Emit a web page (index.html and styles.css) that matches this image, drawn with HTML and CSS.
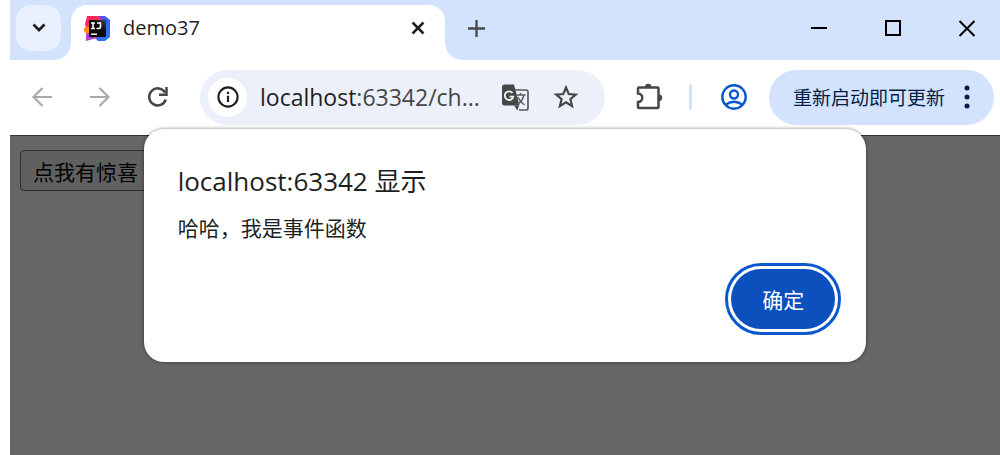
FILE: index.html
```
<!DOCTYPE html>
<html lang="zh-CN">
<head>
    <meta charset="UTF-8">
    <meta name="viewport" content="width=device-width, initial-scale=1.0">
    <title>demo37</title>
    <link rel="stylesheet" href="styles.css">
</head>
<body>
<div class="browser">
    <!-- 标签栏 -->
    <header class="tab-strip">
        <button class="tab-search" aria-label="搜索标签页">
            <svg width="14" height="10" viewBox="0 0 14 10"><path d="M1.500 1.500l5.500 5.500 5.500-5.500" fill="none" stroke="#1f1f1f" stroke-width="2.700"/></svg>
        </button>
        <div class="tab">
            <svg class="favicon" width="27" height="27" viewBox="0 0 27 27">
                <defs>
                    <linearGradient id="ij-blue" x1="0" y1="0" x2="1" y2="1">
                        <stop offset="0" stop-color="#8a45e8"/>
                        <stop offset=".5" stop-color="#2f62f5"/>
                        <stop offset="1" stop-color="#2b7df0"/>
                    </linearGradient>
                    <linearGradient id="ij-dark" x1="0" y1="1" x2="1" y2="0">
                        <stop offset="0" stop-color="#000"/>
                        <stop offset=".6" stop-color="#0b0b0b"/>
                        <stop offset="1" stop-color="#444"/>
                    </linearGradient>
                </defs>
                <path d="M14 1h7l5 4v17l-5 4h-7l-4-4z" fill="url(#ij-blue)"/>
                <path d="M3 1h11l5 5-6 10H3L1 9z" fill="#fb2a5c"/>
                <path d="M0 13l6-2v9H3l-3-4z" fill="#ff8a1c"/>
                <path d="M2 19l6-3 6 7-5 1-7 2z" fill="#b43fd0"/>
                <path d="M5 5h17v17H5z" fill="url(#ij-dark)"/>
                <path d="M7 8h4M9 8v5.500M7 13.500h4M13 8h3.500v4q0 1.500-1.500 1.500h-2.500M7 19.300h6" fill="none" stroke="#fff" stroke-width="1.600"/>
            </svg>
            <span class="tab-title">demo37</span>
            <button class="icon-btn" aria-label="关闭标签页">
                <svg width="14" height="14" viewBox="0 0 14 14"><path d="M1.500 1.500l11 11M12.500 1.500l-11 11" stroke="#1f1f1f" stroke-width="2.500"/></svg>
            </button>
        </div>
        <button class="icon-btn new-tab" aria-label="新标签页">
            <svg width="17" height="17" viewBox="0 0 17 17"><path d="M8.500 0v17M0 8.500h17" stroke="#474747" stroke-width="2.300"/></svg>
        </button>
        <div class="window-controls">
            <button class="icon-btn" aria-label="最小化">
                <svg width="18" height="18" viewBox="0 0 18 18"><path d="M1 9h16" stroke="#000" stroke-width="2"/></svg>
            </button>
            <button class="icon-btn" aria-label="最大化">
                <svg width="18" height="18" viewBox="0 0 18 18"><path d="M2 2h14v14H2z" fill="none" stroke="#000" stroke-width="2"/></svg>
            </button>
            <button class="icon-btn" aria-label="关闭">
                <svg width="18" height="18" viewBox="0 0 18 18"><path d="M1.500 2l15 15M16.500 2l-15 15" stroke="#000" stroke-width="2"/></svg>
            </button>
        </div>
    </header>

    <!-- 工具栏 -->
    <div class="toolbar">
        <nav class="nav-buttons">
            <button class="icon-btn" aria-label="后退">
                <svg width="20" height="20" viewBox="0 0 20 20"><path d="M20 10H2M10.500 1L1.500 10l9 9" fill="none" stroke="#a9a9a9" stroke-width="2.200"/></svg>
            </button>
            <button class="icon-btn" aria-label="前进">
                <svg width="20" height="20" viewBox="0 0 20 20"><path d="M0 10h18M9.500 1l9 9-9 9" fill="none" stroke="#a9a9a9" stroke-width="2.200"/></svg>
            </button>
            <button class="icon-btn" aria-label="重新加载">
                <svg width="20" height="20" viewBox="0 0 20 20"><path d="M17.800 12.500A8.500 8.500 0 1 1 17 5.500" fill="none" stroke="#474747" stroke-width="2.500"/><path d="M18.500 0v7.800H11" fill="none" stroke="#474747" stroke-width="2.500"/></svg>
            </button>
        </nav>

        <div class="omnibox">
            <button class="site-info" aria-label="查看网站信息">
                <svg width="22" height="22" viewBox="0 0 22 22"><circle cx="11" cy="11" r="9.600" fill="none" stroke="#1f1f1f" stroke-width="2.100"/><path d="M11 9.800v6.200M11 5.800v2.200" stroke="#1f1f1f" stroke-width="2.200"/></svg>
            </button>
            <a class="url" href="#">localhost<span>:63342/ch...</span></a>
            <button class="icon-btn" aria-label="翻译此页">
                <svg width="27" height="27" viewBox="0 0 27 27">
                    <path d="M13 6h11q2 0 2 2v16q0 2-2 2h-7" fill="none" stroke="#5c5c5c" stroke-width="1.700"/>
                    <path d="M2.500.500h9.500l5.500 21H2.500q-2.500 0-2.500-2.500V3Q0 .500 2.500.500z" fill="#474747"/>
                    <path d="M12 21.500h5l-1.500 5z" fill="#474747"/>
                    <path d="M10.500 9a4.300 4.300 0 1 0 .8 3.600H7.500" fill="none" stroke="#ecf0fa" stroke-width="1.900"/>
                    <path d="M15 11h8.500M18.500 9v2M22 11q-1.500 6-6 9M15.800 13q2 4.500 6.700 8" fill="none" stroke="#5c5c5c" stroke-width="1.500"/>
                </svg>
            </button>
            <button class="icon-btn" aria-label="加入书签">
                <svg width="26" height="26" viewBox="0 0 26 26"><path d="M13 3.500l2.700 6.500 7.100.600-5.400 4.600 1.700 6.900L13 18.400l-6.100 3.700 1.700-6.900-5.400-4.600 7.100-.600z" fill="none" stroke="#474747" stroke-width="2.200"/></svg>
            </button>
        </div>

        <button class="icon-btn" aria-label="扩展程序">
            <svg width="28" height="28" viewBox="0 0 28 28"><path d="M4 4.500h18.500q1 0 1 1v18.500q0 1-1 1H4q-1 0-1-1v-5a4.200 4.200 0 0 0 0-8.500V5.500q0-1 1-1z" fill="none" stroke="#474747" stroke-width="2.500"/><path d="M10 4a3.200 3.200 0 0 1 6.400 0zM24 11.500a3.200 3.200 0 0 1 0 6.400z" fill="#474747"/></svg>
        </button>
        <span class="divider"></span>
        <button class="icon-btn" aria-label="个人资料">
            <svg width="26" height="26" viewBox="0 0 26 26" fill="none" stroke="#0b57d0" stroke-width="2.400"><circle cx="13" cy="13" r="11.700"/><circle cx="13" cy="10.500" r="4"/><path d="M4.500 20.800q8.500-6 17 0"/></svg>
        </button>
        <button class="update-btn">
            重新启动即可更新
            <svg width="6" height="24" viewBox="0 0 6 24" fill="#041e49"><circle cx="3" cy="3" r="2.500"/><circle cx="3" cy="12" r="2.500"/><circle cx="3" cy="21" r="2.500"/></svg>
        </button>
    </div>

    <!-- 网页内容 -->
    <main class="page">
        <button class="page-btn">点我有惊喜</button>

        <dialog class="alert" open aria-labelledby="alert-title">
            <h1 id="alert-title">localhost:63342 显示</h1>
            <p>哈哈，我是事件函数</p>
            <div class="alert-actions">
                <button class="ok-btn">确定</button>
            </div>
        </dialog>
    </main>
</div>
</body>
</html>
```
FILE: styles.css
```
* {
    box-sizing: border-box;
}

body {
    margin: 0;
    background-color: #fff;
    color: #1f1f1f;
    font-family: "Open Sans", "Noto Sans CJK SC", sans-serif;
}

button {
    font-family: inherit;
    border: none;
    padding: 0;
    background: none;
    cursor: pointer;
}

svg {
    display: block;
    flex: none;
}

.browser {
    display: flex;
    flex-direction: column;
    min-height: 100vh;
    margin-left: 10px;
}

.icon-btn {
    display: flex;
    align-items: center;
    justify-content: center;
    flex: none;
    width: 28px;
    height: 28px;
}

/* 标签栏 */
.tab-strip {
    display: flex;
    height: 60px;
    padding: 5px 19px 0 6px;
    background-color: #d3e3fd;
}

.tab-search {
    display: flex;
    align-items: center;
    justify-content: center;
    width: 45px;
    height: 46px;
    border-radius: 15px;
    background-color: #e9f0fe;
}

.tab {
    position: relative;
    display: flex;
    align-items: center;
    flex: 0 1 374px;
    gap: 12px;
    margin-left: 10px;
    padding: 0 13px 9px;
    border-radius: 16px 16px 0 0;
    background-color: #fff;
}

/* 标签底部两侧的圆角 */
.tab::before,
.tab::after {
    content: "";
    position: absolute;
    bottom: 0;
    width: 16px;
    height: 16px;
}

.tab::before {
    right: 100%;
    background: radial-gradient(circle at 0 0, transparent 15px, #fff 16px);
}

.tab::after {
    left: 100%;
    background: radial-gradient(circle at 100% 0, transparent 15px, #fff 16px);
}

.tab-title {
    flex: 1;
    font-size: 20px;
    line-height: 30px;
}

.new-tab {
    margin: 9px 0 0 17px;
}

.window-controls {
    display: flex;
    gap: 46px;
    margin: 9px 0 0 auto;
}

/* 工具栏 */
.toolbar {
    display: flex;
    align-items: center;
    height: 76px;
    padding: 0 6px 1px 18px;
    border-bottom: 1px solid #333;
}

.nav-buttons {
    display: flex;
    gap: 30px;
    margin-right: 28px;
}

.omnibox {
    display: flex;
    align-items: center;
    flex: 1;
    gap: 23px;
    min-width: 0;
    height: 55px;
    margin-right: 30px;
    padding: 0 25px 0 8px;
    border-radius: 28px;
    background-color: #ecf0fa;
}

.site-info {
    display: flex;
    align-items: center;
    justify-content: center;
    flex: none;
    width: 39px;
    height: 39px;
    border-radius: 50%;
    background-color: #fff;
}

.url {
    flex: 1;
    min-width: 0;
    margin-left: -10px;
    color: #1f1f1f;
    font-size: 23px;
    line-height: 30px;
    text-decoration: none;
    white-space: nowrap;
}

.url span {
    color: #474747;
}

.divider {
    flex: none;
    width: 3px;
    height: 26px;
    margin: 0 28px 0 26px;
    border-radius: 2px;
    background-color: #d3e3fd;
}

.update-btn {
    display: flex;
    align-items: center;
    justify-content: space-between;
    flex: none;
    width: 225px;
    height: 55px;
    margin-left: 21px;
    padding: 0 24px;
    border-radius: 28px;
    background-color: #d3e3fd;
    color: #041e49;
    font-size: 19px;
    white-space: nowrap;
}

/* 网页内容 */
.page {
    position: relative;
    flex: 1;
    padding: 14px 10px;
    background-color: #666;
}

.page-btn {
    height: 41px;
    padding: 0 12px;
    border: 1px solid #2f2f2f;
    border-radius: 4px;
    background-color: #606060;
    color: #000;
    font-size: 21px;
}

/* 弹窗 */
.alert {
    top: -7px;
    width: 73%;
    margin: 0 auto;
    padding: 34px 31px 33px 34px;
    border: none;
    border-radius: 20px;
    background-color: #fff;
    color: #1f1f1f;
    box-shadow: 0 0 3px 1px rgba(0, 0, 0, 0.3);
}

.alert h1 {
    margin: 0 0 14px;
    font-size: 26px;
    font-weight: normal;
    line-height: 36px;
}

.alert p {
    margin: 0;
    font-size: 21px;
    line-height: 30px;
}

.alert-actions {
    display: flex;
    justify-content: flex-end;
    margin-top: 26px;
}

.ok-btn {
    width: 104px;
    height: 60px;
    border-radius: 30px;
    background-color: #0b50bd;
    color: #fff;
    font-size: 21px;
    outline: 3px solid #0b57d0;
    outline-offset: 3px;
}
```
